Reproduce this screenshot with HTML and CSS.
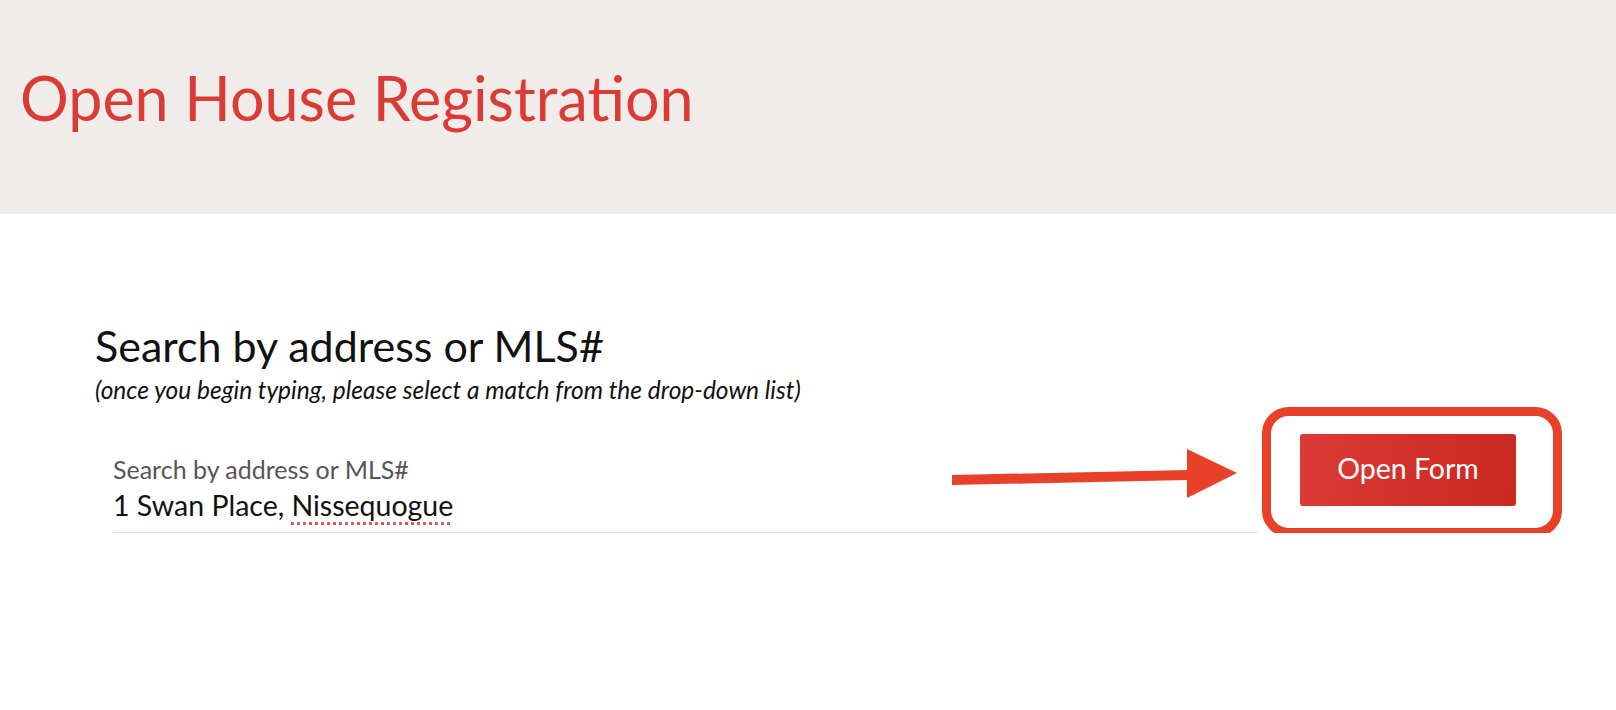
FILE: index.html
```html
<!DOCTYPE html>
<html lang="en">
<head>
<meta charset="utf-8">
<title>Open House Registration</title>
<link rel="stylesheet" href="styles.css">
</head>
<body>
<header class="hero">
  <h1 class="hero-title">Open House Registration</h1>
</header>
<main class="content">
  <h2 class="search-title">Search by address or MLS#</h2>
  <p class="search-hint">(once you begin typing, please select a match from the drop-down list)</p>
  <div class="form-row">
    <label class="field">
      <span class="field-label">Search by address or MLS#</span>
      <span class="field-value">1 Swan Place, <span class="misspelled">Nissequogue</span></span>
    </label>
    <button class="open-btn" type="button">Open Form</button>
    <svg class="annot" width="612" height="130" viewBox="0 0 612 130" aria-hidden="true">
      <polygon points="2,68 238,63 238,73 2,78" fill="#e8412a"/>
      <polygon points="237,42 287,66 237,91" fill="#e8412a"/>
      <rect x="316.5" y="4.5" width="291" height="121" rx="22" ry="22" fill="none" stroke="#e8412a" stroke-width="9"/>
    </svg>
  </div>
</main>
</body>
</html>
```
FILE: styles.css
```css
html, body {
  margin: 0;
  padding: 0;
  background: #ffffff;
}
body {
  font-family: Lato, "Open Sans", "Liberation Sans", sans-serif;
  color: #111;
}
.hero {
  height: 214px;
  box-sizing: border-box;
  background: #f0ece9;
  padding: 61px 0 0 20px;
}
.hero-title {
  margin: 0;
  font-size: 61px;
  font-weight: 400;
  line-height: 1.2;
  color: #db3b36;
}
.content {
  padding: 106px 95px 0 95px;
}
.search-title {
  margin: 0;
  font-size: 43px;
  font-weight: 400;
  line-height: 1.2;
  color: #111;
}
.search-hint {
  margin: 3px 0 0 0;
  font-size: 24.5px;
  font-style: italic;
  line-height: 1.2;
  color: #111;
}
.form-row {
  position: relative;
  display: flex;
  align-items: flex-start;
  margin-top: 30px;
}
.field {
  flex: 1;
  display: flex;
  flex-direction: column;
  margin-left: 18px;
  padding-top: 20px;
  padding-bottom: 5px;
  border-bottom: 1px solid #dcdcdc;
}
.field-label {
  font-size: 25px;
  line-height: 1.2;
  color: #555;
}
.field-value {
  font-size: 28.5px;
  line-height: 1.5;
  color: #111;
}
.misspelled {
  text-decoration: underline dotted #e05050;
  text-underline-offset: 6px;
}
.open-btn {
  width: 216px;
  height: 72px;
  margin-left: 43px;
  margin-right: 5px;
  border: none;
  border-radius: 3px;
  background: linear-gradient(100deg, #dc3a37 0%, #c8291f 100%);
  color: #fff;
  font-family: Lato, "Open Sans", sans-serif;
  font-size: 28.5px;
  padding: 0 0 4px 0;
}
.annot {
  position: absolute;
  left: 855px;
  top: -27px;
}
```
